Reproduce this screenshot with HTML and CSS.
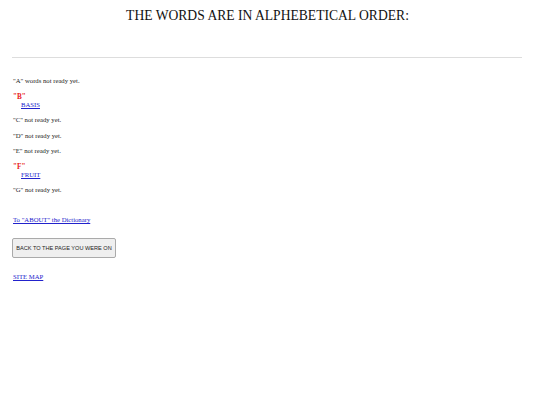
FILE: index.html
```html
<!DOCTYPE html>
<html>
<head>
<meta charset="utf-8">
<link rel="stylesheet" href="styles.css">
</head>
<body>
<div class="page">
  <h1 class="title">THE WORDS ARE IN ALPHEBETICAL ORDER:</h1>
  <hr class="rule">
  <div class="entries">
    <p class="entry">"A" words not ready yet.</p>
    <div class="entry">
      <div class="letter">"B"</div>
      <a class="word" href="#">BASIS</a>
    </div>
    <p class="entry">"C" not ready yet.</p>
    <p class="entry">"D" not ready yet.</p>
    <p class="entry">"E" not ready yet.</p>
    <div class="entry">
      <div class="letter">"F"</div>
      <a class="word" href="#">FRUIT</a>
    </div>
    <p class="entry">"G" not ready yet.</p>
  </div>
  <a class="link about" href="#">To "ABOUT" the Dictionary</a>
  <button class="back" type="button">BACK TO THE PAGE YOU WERE ON</button>
  <a class="link sitemap" href="#">SITE MAP</a>
</div>
</body>
</html>
```
FILE: styles.css
```css
html, body {
  margin: 0;
  padding: 0;
  background: #ffffff;
}
.page {
  padding: 0 18px 0 13px;
  display: flex;
  flex-direction: column;
  align-items: flex-start;
  font-family: "Liberation Serif", "Times New Roman", serif;
  font-size: 6.7px;
  line-height: 8px;
  color: #222222;
}
.title {
  align-self: stretch;
  margin: 7px 0 0;
  font-size: 13.6px;
  line-height: 18px;
  font-weight: normal;
  text-align: center;
  color: #111111;
}
.rule {
  align-self: stretch;
  margin: 32px 0 19px -1px;
  border: none;
  border-top: 1px solid #dddddd;
  height: 0;
}
.entries {
  display: flex;
  flex-direction: column;
  align-items: flex-start;
  gap: 7.5px;
}
.entry {
  margin: 0;
  display: flex;
  flex-direction: column;
  align-items: flex-start;
}
.letter {
  color: #e82020;
  font-weight: bold;
  font-size: 7.2px;
}
.word {
  margin-left: 8px;
  color: #2222cc;
}
.link {
  color: #2222cc;
}
.about {
  margin-top: 22px;
}
.back {
  margin: 14px 0 15px -1px;
  width: 104px;
  height: 20px;
  padding: 0;
  font-family: "Liberation Sans", Arial, sans-serif;
  font-size: 5.6px;
  color: #222222;
  background: #efefef;
  border: 1px solid #aaaaaa;
  border-radius: 2px;
}
```
